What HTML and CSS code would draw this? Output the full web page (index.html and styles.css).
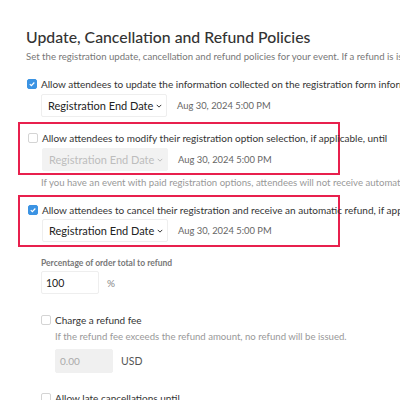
FILE: index.html
```html
<!DOCTYPE html>
<html>
<head>
<meta charset="utf-8">
<link rel="stylesheet" href="styles.css">
</head>
<body>
<div class="page">
  <h1 class="title">Update, Cancellation and Refund Policies</h1>
  <p class="subtitle">Set the registration update, cancellation and refund policies for your event. If a refund is issued</p>

  <div class="group first">
    <div class="check-row">
      <span class="cb checked"><svg viewBox="0 0 10 10"><path d="M2.2 5.2 L4.2 7.1 L7.9 3.1" fill="none" stroke="#fff" stroke-width="1.5"/></svg></span>
      <span class="label">Allow attendees to update the information collected on the registration form information until</span>
    </div>
    <div class="select-row">
      <div class="select"><span>Registration End Date</span><svg class="chev" viewBox="0 0 8 5"><path d="M1 1 L4 4 L7 1" fill="none" stroke="#333" stroke-width="1.3"/></svg></div>
      <span class="date">Aug 30, 2024 5:00 PM</span>
    </div>
  </div>

  <div class="box box1">
    <div class="check-row">
      <span class="cb"></span>
      <span class="label">Allow attendees to modify their registration option selection, if applicable, until</span>
    </div>
    <div class="select-row">
      <div class="select disabled"><span>Registration End Date</span><svg class="chev" viewBox="0 0 8 5"><path d="M1 1 L4 4 L7 1" fill="none" stroke="#bbb" stroke-width="1.3"/></svg></div>
      <span class="date">Aug 30, 2024 5:00 PM</span>
    </div>
  </div>
  <p class="help help1">If you have an event with paid registration options, attendees will not receive automatic refunds</p>

  <div class="box box2">
    <div class="check-row">
      <span class="cb checked"><svg viewBox="0 0 10 10"><path d="M2.2 5.2 L4.2 7.1 L7.9 3.1" fill="none" stroke="#fff" stroke-width="1.5"/></svg></span>
      <span class="label">Allow attendees to cancel their registration and receive an automatic refund, if applicable, until</span>
    </div>
    <div class="select-row">
      <div class="select"><span>Registration End Date</span><svg class="chev" viewBox="0 0 8 5"><path d="M1 1 L4 4 L7 1" fill="none" stroke="#333" stroke-width="1.3"/></svg></div>
      <span class="date">Aug 30, 2024 5:00 PM</span>
    </div>
  </div>

  <div class="sub">
    <div class="field-label">Percentage of order total to refund</div>
    <div class="input-row">
      <div class="input">100</div>
      <span class="unit">%</span>
    </div>

    <div class="check-row fee-row">
      <span class="cb"></span>
      <span class="label">Charge a refund fee</span>
    </div>
    <div class="nested">
      <p class="help help2">If the refund fee exceeds the refund amount, no refund will be issued.</p>
      <div class="input-row fee-input">
        <div class="input disabled">0.00</div>
        <span class="unit usd">USD</span>
      </div>
    </div>

    <div class="check-row late-row">
      <span class="cb"></span>
      <span class="label">Allow late cancellations until</span>
    </div>
  </div>
</div>
</body>
</html>
```

FILE: styles.css
```css
* { box-sizing: border-box; }
html, body {
  margin: 0;
  padding: 0;
  background: #fff;
  overflow: hidden;
}
body {
  font-family: Lato, "Open Sans", sans-serif;
  color: #333;
  width: 400px;
  height: 400px;
}
.page {
  padding: 0 0 0 26px;
  width: 400px;
  height: 400px;
  overflow: hidden;
  white-space: nowrap;
}
.title {
  margin: 0;
  padding-top: 26px;
  font-size: 15.8px;
  line-height: 22px;
  font-weight: 500;
  color: #333;
}
.subtitle {
  margin: 0;
  margin-top: 2px;
  font-size: 9.6px;
  line-height: 14px;
  color: #777;
}
.group.first {
  margin-top: 13px;
  padding-left: 1px;
}
.check-row {
  display: flex;
  align-items: center;
  height: 14px;
}
.cb {
  width: 10px;
  height: 10px;
  border: 1px solid #d4d4d4;
  border-radius: 2px;
  background: #fff;
  flex: none;
  margin-right: 4px;
  display: flex;
}
.cb.checked {
  background: #3b93e3;
  border-color: #3b93e3;
}
.cb svg { width: 100%; height: 100%; }
.label {
  font-size: 10px;
  color: #333;
}
.select-row {
  display: flex;
  align-items: center;
  margin-top: 3px;
  margin-left: 14px;
}
.select {
  width: 126px;
  height: 23px;
  border: 1px solid #eee;
  border-radius: 2px;
  background: #fff;
  display: flex;
  align-items: center;
  justify-content: space-between;
  padding: 0 4px 0 6px;
  font-size: 11px;
  color: #222;
}
.select.disabled {
  background: #f2f2f2;
  border-color: #f2f2f2;
  color: #bdbdbd;
}
.chev { width: 6px; height: 4px; }
.date {
  margin-left: 10px;
  font-size: 9.4px;
  color: #666;
}
.box {
  width: 322px;
  margin-left: -8px;
  border: 2px solid #e8204d;
  padding-left: 8px;
}
.box1 {
  margin-top: 5px;
  padding-top: 7px;
  padding-bottom: 2px;
}
.box2 {
  margin-top: 5px;
  padding-top: 6px;
  padding-bottom: 3px;
}
.box2 .select-row { margin-top: 2px; }
.help {
  margin: 0;
  font-size: 9.6px;
  line-height: 14px;
  color: #999;
}
.help1 {
  margin-top: 1px;
  margin-left: 15px;
}
.sub {
  padding-left: 15px;
}
.field-label {
  margin-top: 10px;
  font-size: 8.5px;
  line-height: 12px;
  font-weight: 700;
  color: #777;
}
.input-row {
  display: flex;
  align-items: center;
  margin-top: 2px;
}
.input {
  width: 58px;
  height: 23px;
  border: 1px solid #eee;
  border-radius: 2px;
  padding-left: 4px;
  display: flex;
  align-items: center;
  font-size: 10.5px;
  color: #222;
}
.input.disabled {
  background: #f0f0f0;
  border-color: #f0f0f0;
  color: #aaa;
  height: 24px;
  font-size: 10px;
}
.unit {
  margin-left: 8px;
  font-size: 10px;
  color: #888;
}
.unit.usd { color: #555; font-size: 10.5px; }
.fee-row { margin-top: 19px; }
.nested { padding-left: 14px; }
.help2 { margin-top: 3px; }
.fee-input { margin-top: 5px; }
.late-row { margin-top: 18px; }
```
